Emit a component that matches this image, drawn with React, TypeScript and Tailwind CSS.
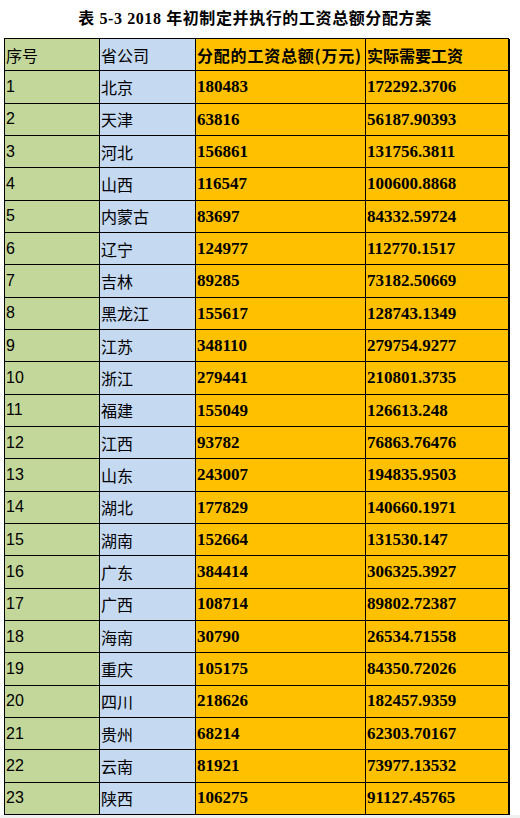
const rows: [string, string, string][] = [
  ["北京", "180483", "172292.3706"],
  ["天津", "63816", "56187.90393"],
  ["河北", "156861", "131756.3811"],
  ["山西", "116547", "100600.8868"],
  ["内蒙古", "83697", "84332.59724"],
  ["辽宁", "124977", "112770.1517"],
  ["吉林", "89285", "73182.50669"],
  ["黑龙江", "155617", "128743.1349"],
  ["江苏", "348110", "279754.9277"],
  ["浙江", "279441", "210801.3735"],
  ["福建", "155049", "126613.248"],
  ["江西", "93782", "76863.76476"],
  ["山东", "243007", "194835.9503"],
  ["湖北", "177829", "140660.1971"],
  ["湖南", "152664", "131530.147"],
  ["广东", "384414", "306325.3927"],
  ["广西", "108714", "89802.72387"],
  ["海南", "30790", "26534.71558"],
  ["重庆", "105175", "84350.72026"],
  ["四川", "218626", "182457.9359"],
  ["贵州", "68214", "62303.70167"],
  ["云南", "81921", "73977.13532"],
  ["陕西", "106275", "91127.45765"],
];

const cjk = "font-['Noto_Sans_CJK_SC',sans-serif]";
const serifCjk = "font-['Liberation_Serif','Noto_Sans_CJK_SC',serif]";
const cell = "h-[32.33px] flex items-center pl-[1px] border-b border-r border-black overflow-hidden whitespace-nowrap text-black";

export default function App() {
  return (
    <div className="w-[520px] bg-white">
      <div className={`h-[37px] flex items-center justify-center pr-[10px] text-[16px] font-bold tracking-[0.6px] text-black ${serifCjk}`}>
        表 5-3 2018 年初制定并执行的工资总额分配方案
      </div>
      <div className="ml-[4px] mt-[1px] w-[505px] border-l border-t border-black grid grid-cols-[95px_96px_170px_144px]">
        <div className={`${cell} bg-[#c4d79b] text-[16px] ${cjk}`}>序号</div>
        <div className={`${cell} bg-[#c5d9f1] text-[16px] ${cjk}`}>省公司</div>
        <div className={`${cell} bg-[#ffc000] text-[16px] font-bold tracking-[0.8px] ${cjk}`}>分配的工资总额(万元)</div>
        <div className={`${cell} bg-[#ffc000] text-[16px] font-bold border-r-2 ${cjk}`}>实际需要工资</div>
        {rows.map(([name, total, need], i) => (
          <div key={name} className="contents">
            <div className={`${cell} bg-[#c4d79b] text-[16px] font-['Liberation_Sans',sans-serif]`}>{i + 1}</div>
            <div className={`${cell} bg-[#c5d9f1] text-[16px] ${cjk}`}>{name}</div>
            <div className={`${cell} bg-[#ffc000] text-[17px] font-bold font-['Liberation_Serif',serif]`}>{total}</div>
            <div className={`${cell} bg-[#ffc000] text-[17px] font-bold border-r-2 font-['Liberation_Serif',serif]`}>{need}</div>
          </div>
        ))}
      </div>
      <div className="h-[4px] bg-[#f0f0f0]" />
    </div>
  );
}
